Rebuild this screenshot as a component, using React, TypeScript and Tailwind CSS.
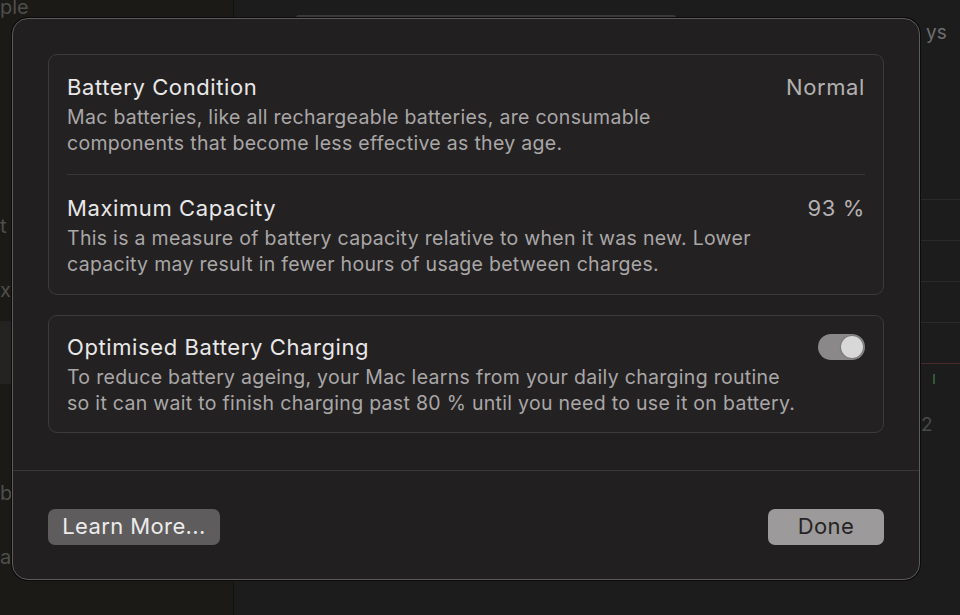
import React from "react";

const font = { fontFamily: "Inter, 'Noto Sans', 'Liberation Sans', sans-serif" };

function Toggle() {
  return (
    <div className="flex h-[26px] w-[47px] shrink-0 items-center justify-end rounded-full bg-[#8a8888] px-[2px]">
      <div className="h-[22px] w-[22px] rounded-full bg-[#d9d8d8] shadow-[0_0_2px_rgba(0,0,0,0.4)]" />
    </div>
  );
}

function Row({
  title,
  desc,
  right,
  className = "",
}: {
  title: string;
  desc: string[];
  right: React.ReactNode;
  className?: string;
}) {
  return (
    <div className={`flex items-start justify-between px-[18px] ${className}`}>
      <div className="flex flex-col">
        <div className="text-[22px] leading-[26px] tracking-[0.6px] text-[#e9e8e8]">{title}</div>
        <div className="mt-[4px] text-[19.5px] leading-[26px] tracking-[0.3px] text-[#a9a7a7]">
          {desc.map((d) => (
            <div key={d}>{d}</div>
          ))}
        </div>
      </div>
      {right}
    </div>
  );
}

export default function App() {
  return (
    <div className="relative h-[615px] w-[960px] overflow-hidden bg-[#1c1c1c]" style={font}>
      {/* dimmed window behind the sheet */}
      <div className="flex h-full">
        <aside className="flex w-[233px] flex-col bg-[#1b1a17] text-[20px] text-[#4f4e4b]">
          <div className="-mt-[6px] leading-[26px]">ple</div>
          <div className="mt-[193px] leading-[26px]">t</div>
          <div className="mt-[38px] leading-[26px]">x</div>
          <div className="mt-[18px] h-[63px] bg-[#242321]" />
          <div className="mt-[96px] leading-[26px]">b</div>
          <div className="mt-[38px] leading-[26px]">a</div>
        </aside>
        <main className="flex flex-1 flex-col border-l border-[#111]">
          <div className="flex h-[18px] items-end pl-[62px]">
            <div className="h-[3px] w-[380px] rounded-t bg-[#3a3a3a]" />
          </div>
          <div className="flex flex-1 justify-end">
            <div className="flex w-[40px] flex-col text-[19px] text-[#6f6e6e]">
              <div className="mt-[2px] pl-[6px] leading-[26px]">ys</div>
              <div className="mt-[153px] flex flex-col gap-[40px]">
                <div className="h-px bg-[#2a2a2a]" />
                <div className="h-px bg-[#2a2a2a]" />
                <div className="h-px bg-[#2a2a2a]" />
                <div className="h-px bg-[#2a2a2a]" />
                <div className="h-px bg-[#4a2a2a]" />
              </div>
              <div className="ml-[13px] mt-[10px] h-[10px] w-[2px] bg-[#2e5a3a]" />
              <div className="mt-[28px] pl-[1px] leading-[26px] text-[#4a4a4a]">2</div>
            </div>
          </div>
        </main>
      </div>

      {/* sheet */}
      <div className="absolute left-[12px] top-[18px] flex h-[562px] w-[908px] flex-col rounded-[16px] border border-[#5d5b5b] bg-[#221f20] shadow-[0_0_0_1px_#0b0b0b]">
        <div className="flex flex-col gap-[20px] px-[35px] pt-[35px]">
          <div className="flex flex-col rounded-[9px] border border-[#3d3a3b] bg-[#242122]">
            <Row
              className="pb-[18px] pt-[19px]"
              title="Battery Condition"
              desc={[
                "Mac batteries, like all rechargeable batteries, are consumable",
                "components that become less effective as they age.",
              ]}
              right={<div className="text-[22px] leading-[26px] tracking-[0.6px] text-[#b3b1b1]">Normal</div>}
            />
            <div className="mx-[18px] h-px bg-[#3a3738]" />
            <Row
              className="pb-[17px] pt-[20px]"
              title="Maximum Capacity"
              desc={[
                "This is a measure of battery capacity relative to when it was new. Lower",
                "capacity may result in fewer hours of usage between charges.",
              ]}
              right={<div className="text-[22px] leading-[26px] tracking-[0.6px] text-[#b3b1b1]">93 %</div>}
            />
          </div>
          <div className="flex flex-col rounded-[9px] border border-[#3d3a3b] bg-[#242122]">
            <Row
              className="pb-[16px] pt-[18px]"
              title="Optimised Battery Charging"
              desc={[
                "To reduce battery ageing, your Mac learns from your daily charging routine",
                "so it can wait to finish charging past 80 % until you need to use it on battery.",
              ]}
              right={<Toggle />}
            />
          </div>
        </div>
        <div className="mt-[37px] h-px bg-[#3a3738]" />
        <div className="flex flex-1 items-center justify-between px-[35px] pt-[3px]">
          <button className="h-[36px] w-[172px] rounded-[7px] bg-[#5e5c5c] text-[22px] tracking-[0.4px] text-[#ecebeb]">
            Learn More...
          </button>
          <button className="h-[36px] w-[116px] rounded-[7px] bg-[#9c9a9a] text-[22px] tracking-[0.4px] text-[#262424]">
            Done
          </button>
        </div>
      </div>
    </div>
  );
}
